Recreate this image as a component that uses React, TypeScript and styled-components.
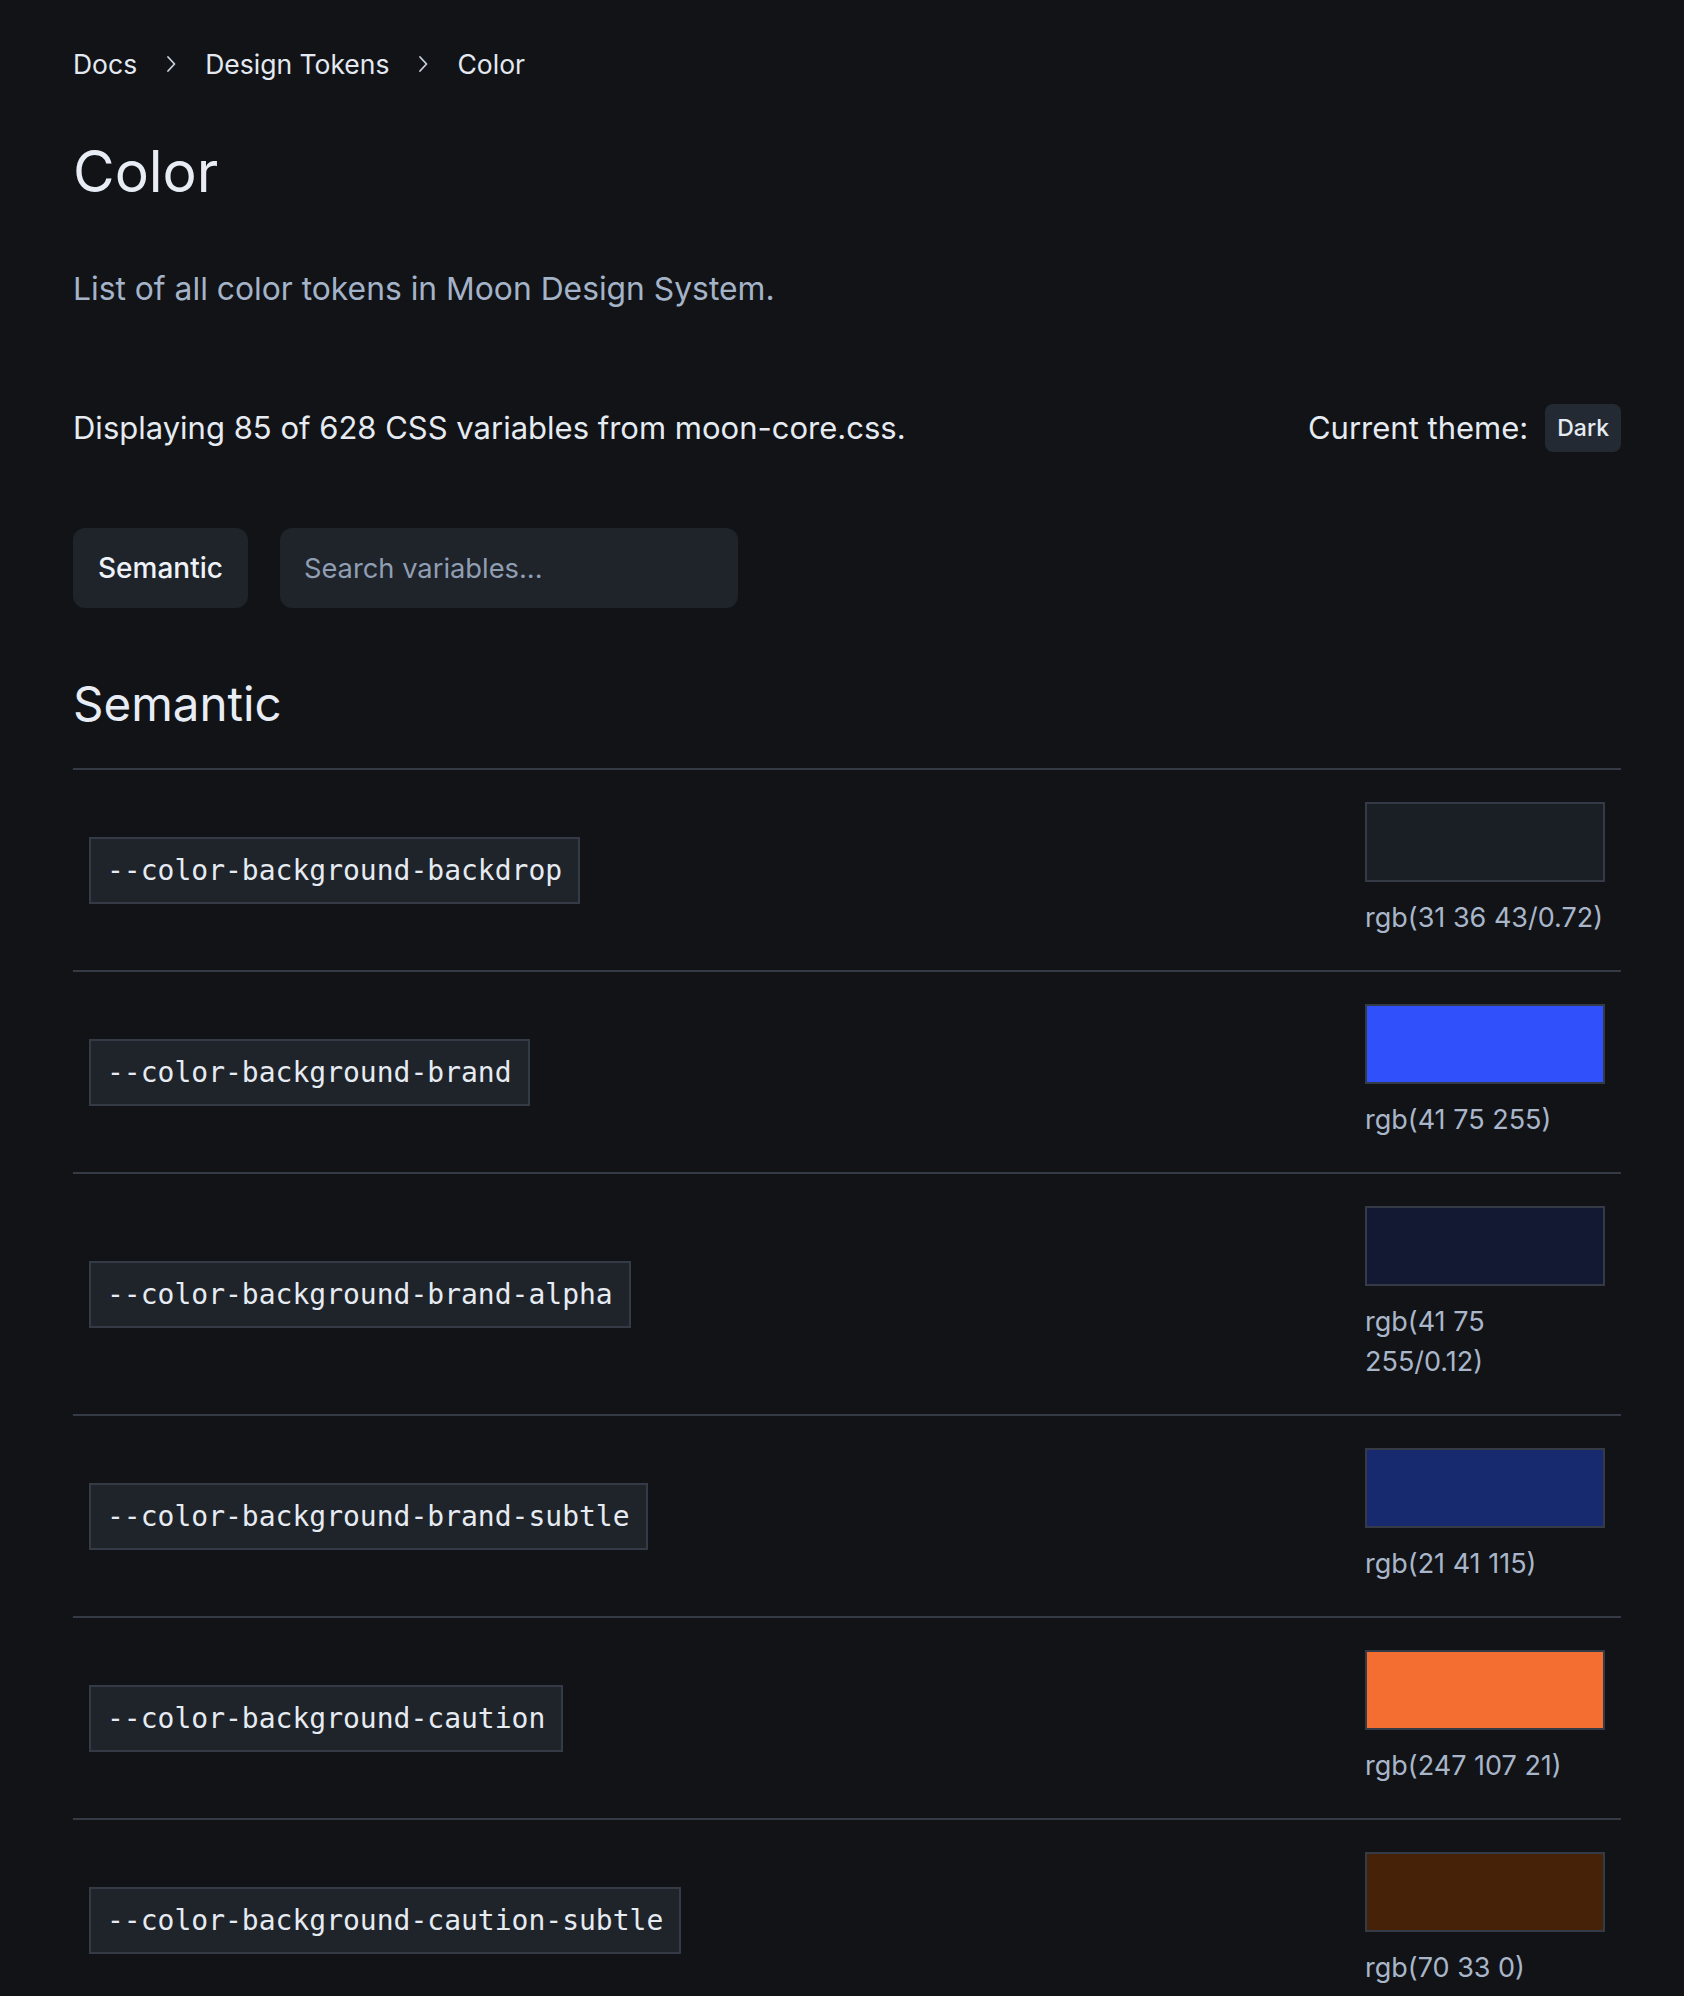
import React from "react";
import styled, { createGlobalStyle } from "styled-components";

const GlobalStyle = createGlobalStyle`
  html, body {
    margin: 0;
    padding: 0;
    background: #111317;
  }
  body {
    font-family: Inter, "Noto Sans", "Liberation Sans", sans-serif;
    color: #e6ebf2;
    -webkit-font-smoothing: antialiased;
  }
  * { box-sizing: border-box; }
`;

const Page = styled.main`
  padding: 46px 63px 0 73px;
  display: flex;
  flex-direction: column;
`;

const Crumbs = styled.nav`
  display: flex;
  align-items: center;
  gap: 22px;
  height: 36px;
`;

const Crumb = styled.span`
  font-size: 26.5px;
  line-height: 36px;
  color: #e4e9f1;
`;

const Chevron = styled.svg`
  width: 24px;
  height: 24px;
  flex: none;
  color: #c9d1dc;
`;

const Title = styled.h1`
  margin: 54px 0 0;
  font-size: 57px;
  line-height: 72px;
  font-weight: 400;
  color: #e8edf5;
`;

const Lead = styled.p`
  margin: 59px 0 0;
  font-size: 31.8px;
  line-height: 44px;
  color: #a4b3c8;
`;

const InfoRow = styled.div`
  margin-top: 93px;
  display: flex;
  align-items: center;
  justify-content: space-between;
  height: 48px;
`;

const InfoText = styled.span`
  font-size: 31px;
  line-height: 44px;
  color: #e6ebf2;
`;

const Theme = styled.div`
  display: flex;
  align-items: center;
  gap: 17px;
`;

const Badge = styled.span`
  height: 48px;
  padding: 0 12px;
  display: inline-flex;
  align-items: center;
  border-radius: 8px;
  background: #242a33;
  font-size: 23px;
  font-weight: 500;
  color: #e6ebf2;
`;

const Controls = styled.div`
  margin-top: 76px;
  display: flex;
  gap: 32px;
`;

const FilterButton = styled.button`
  height: 80px;
  padding: 0 25px;
  border: none;
  border-radius: 12px;
  background: #1f232a;
  font-family: inherit;
  font-size: 28px;
  font-weight: 500;
  color: #eef2f8;
`;

const Search = styled.input`
  width: 458px;
  height: 80px;
  padding: 0 24px;
  border: none;
  border-radius: 12px;
  background: #1f232a;
  font-family: inherit;
  font-size: 27.3px;
  color: #e6ebf2;
  outline: none;
  &::placeholder {
    color: #909eb3;
    opacity: 1;
  }
`;

const SectionTitle = styled.h2`
  margin: 66px 0 0;
  font-size: 47.5px;
  line-height: 60px;
  font-weight: 400;
  color: #e8edf5;
`;

const List = styled.div`
  margin-top: 34px;
  display: flex;
  flex-direction: column;
`;

const Row = styled.div`
  display: flex;
  align-items: center;
  justify-content: space-between;
  padding: 32px 16px;
  border-top: 2px solid #343b46;
`;

const VarName = styled.code`
  font-family: "DejaVu Sans Mono", "Liberation Mono", monospace;
  font-size: 28px;
  line-height: 35px;
  padding: 14px 16px;
  background: #1f232a;
  border: 2px solid #343b46;
  color: #e6ebf2;
`;

const SwatchCol = styled.div`
  width: 240px;
  display: flex;
  flex-direction: column;
  gap: 16px;
`;

const Swatch = styled.div<{ $color: string }>`
  width: 240px;
  height: 80px;
  border: 2px solid #343b46;
  background: ${(p) => p.$color};
`;

const Value = styled.span`
  font-size: 27px;
  line-height: 40px;
  color: #a9b6c9;
`;

type Token = { name: string; value: string; color: string };

const tokens: Token[] = [
  { name: "--color-background-backdrop", value: "rgb(31 36 43/0.72)", color: "rgba(31, 36, 43, 0.72)" },
  { name: "--color-background-brand", value: "rgb(41 75 255)", color: "rgb(47, 80, 250)" },
  { name: "--color-background-brand-alpha", value: "rgb(41 75 255/0.12)", color: "rgba(41, 75, 255, 0.12)" },
  { name: "--color-background-brand-subtle", value: "rgb(21 41 115)", color: "rgb(23, 41, 111)" },
  { name: "--color-background-caution", value: "rgb(247 107 21)", color: "rgb(243, 110, 48)" },
  { name: "--color-background-caution-subtle", value: "rgb(70 33 0)", color: "rgb(70, 35, 8)" },
];

const ChevronIcon = () => (
  <Chevron viewBox="0 0 24 24" fill="none" stroke="currentColor" strokeWidth={1.8} strokeLinecap="round" strokeLinejoin="round">
    <path d="M9 5l6.5 7L9 19" />
  </Chevron>
);

export default function App() {
  return (
    <>
      <GlobalStyle />
      <Page>
        <Crumbs>
          <Crumb>Docs</Crumb>
          <ChevronIcon />
          <Crumb>Design Tokens</Crumb>
          <ChevronIcon />
          <Crumb>Color</Crumb>
        </Crumbs>
        <Title>Color</Title>
        <Lead>List of all color tokens in Moon Design System.</Lead>
        <InfoRow>
          <InfoText>Displaying 85 of 628 CSS variables from moon-core.css.</InfoText>
          <Theme>
            <InfoText>Current theme:</InfoText>
            <Badge>Dark</Badge>
          </Theme>
        </InfoRow>
        <Controls>
          <FilterButton>Semantic</FilterButton>
          <Search placeholder="Search variables..." />
        </Controls>
        <SectionTitle>Semantic</SectionTitle>
        <List>
          {tokens.map((t) => (
            <Row key={t.name}>
              <VarName>{t.name}</VarName>
              <SwatchCol>
                <Swatch $color={t.color} />
                <Value>{t.value}</Value>
              </SwatchCol>
            </Row>
          ))}
        </List>
      </Page>
    </>
  );
}
